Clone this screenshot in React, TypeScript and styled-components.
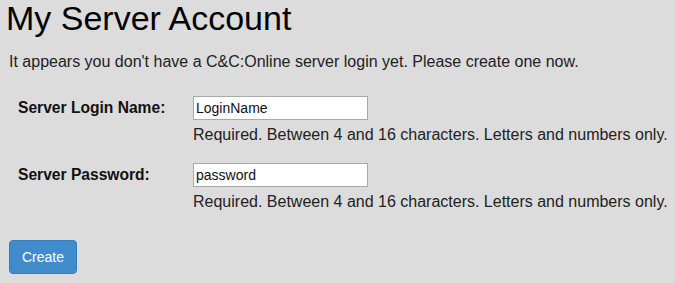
import styled, { createGlobalStyle } from "styled-components";

const GlobalStyle = createGlobalStyle`
  html, body {
    margin: 0;
    padding: 0;
    background: #dcdcdc;
  }
  body {
    font-family: "Liberation Sans", Arial, sans-serif;
    color: #222;
  }
`;

const Page = styled.div`
  padding: 0 9px;
`;

const Title = styled.h1`
  margin: 0 0 0 -3px;
  font-size: 34px;
  font-weight: normal;
  line-height: 36px;
  color: #000;
`;

const Intro = styled.p`
  margin: 15px 0 23px;
  font-size: 16px;
  line-height: 22px;
`;

const FormGrid = styled.form`
  display: grid;
  grid-template-columns: 175px auto;
  padding-left: 9px;
`;

const Label = styled.label`
  font-size: 15.6px;
  font-weight: bold;
  line-height: 24px;
  color: #111;
`;

const Field = styled.div<{ $last?: boolean }>`
  display: flex;
  flex-direction: column;
  margin-bottom: ${(p) => (p.$last ? "0" : "19px")};
`;

const Input = styled.input`
  box-sizing: border-box;
  width: 175px;
  height: 24px;
  margin: 0;
  padding: 0 2px;
  border: 1px solid #a9a9a9;
  background: #fff;
  font-family: "Liberation Sans", Arial, sans-serif;
  font-size: 14px;
  color: #111;
  outline: none;
`;

const Help = styled.span`
  margin-top: 6px;
  font-size: 16px;
  line-height: 18px;
  white-space: nowrap;
  color: #222;
`;

const Button = styled.button`
  display: block;
  margin-top: 29px;
  box-sizing: border-box;
  height: 34px;
  padding: 6px 12px;
  border: 1px solid #357ebd;
  border-radius: 4px;
  background: #428bca;
  color: #fff;
  font-family: "Liberation Sans", Arial, sans-serif;
  font-size: 14px;
  line-height: 20px;
`;

export default function App() {
  return (
    <Page>
      <GlobalStyle />
      <Title>My Server Account</Title>
      <Intro>
        It appears you don't have a C&amp;C:Online server login yet. Please create one now.
      </Intro>
      <FormGrid onSubmit={(e) => e.preventDefault()}>
        <Label>Server Login Name:</Label>
        <Field>
          <Input type="text" defaultValue="LoginName" />
          <Help>Required. Between 4 and 16 characters. Letters and numbers only.</Help>
        </Field>
        <Label>Server Password:</Label>
        <Field $last>
          <Input type="text" defaultValue="password" />
          <Help>Required. Between 4 and 16 characters. Letters and numbers only.</Help>
        </Field>
      </FormGrid>
      <Button>Create</Button>
    </Page>
  );
}
